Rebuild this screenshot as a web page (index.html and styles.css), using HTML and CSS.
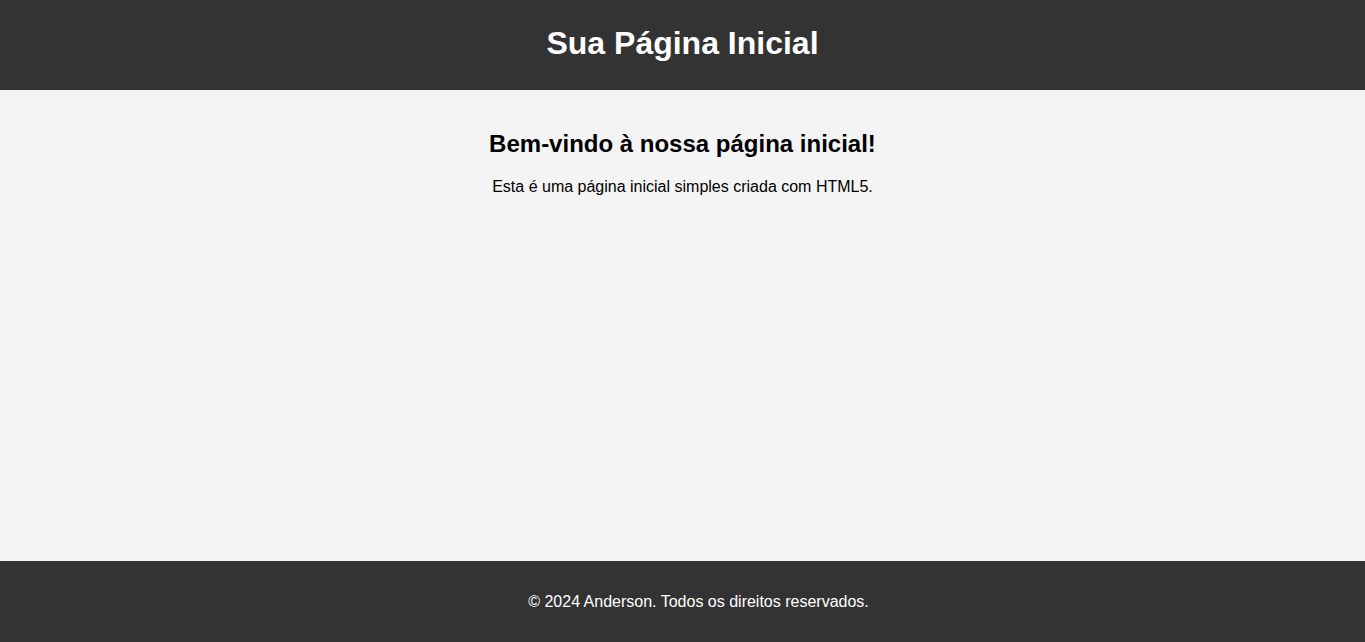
FILE: index.html
```html
<!DOCTYPE html>
<html lang="pt-BR">
<head>
<meta charset="utf-8">
<title>Sua Página Inicial</title>
<link rel="stylesheet" href="styles.css">
</head>
<body>
<header class="site-header">
  <h1 class="site-title">Sua Página Inicial</h1>
</header>
<main class="content">
  <h2 class="welcome">Bem-vindo à nossa página inicial!</h2>
  <p class="intro">Esta é uma página inicial simples criada com HTML5.</p>
</main>
<footer class="site-footer">
  <p class="copy">© 2024 Anderson. Todos os direitos reservados.</p>
</footer>
</body>
</html>
```
FILE: styles.css
```css
html, body {
  height: 100%;
}
body {
  margin: 0;
  font-family: "Liberation Sans", Arial, sans-serif;
  background: #f4f4f4;
  color: #000;
  display: flex;
  flex-direction: column;
  min-height: 100vh;
}
.site-header {
  background: #333;
  color: #fff;
  text-align: center;
  padding: 25px 0 28px;
}
.site-title {
  margin: 0;
  font-size: 32px;
  font-weight: bold;
}
.content {
  flex: 1;
  text-align: center;
  padding: 20px;
}
.welcome {
  font-size: 24px;
  margin: 19.92px 0;
}
.intro {
  font-size: 16px;
  margin: 16px 0;
}
.site-footer {
  background: #333;
  color: #fff;
  text-align: center;
  padding: 16px 0 15px 32px;
}
.copy {
  margin: 16px 0;
  font-size: 16px;
}
```
